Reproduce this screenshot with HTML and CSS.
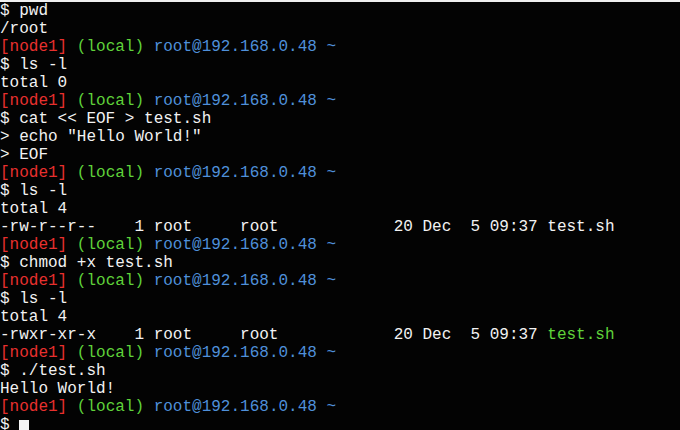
FILE: index.html
```html
<!DOCTYPE html>
<html>
<head>
<meta charset="utf-8">
<link rel="stylesheet" href="styles.css">
</head>
<body>
<div class="term">
<div class="ln">$ pwd</div>
<div class="ln">/root</div>
<div class="ln"><span class="r">[node1]</span> <span class="g">(local)</span> <span class="b">root@192.168.0.48 ~</span></div>
<div class="ln">$ ls -l</div>
<div class="ln">total 0</div>
<div class="ln"><span class="r">[node1]</span> <span class="g">(local)</span> <span class="b">root@192.168.0.48 ~</span></div>
<div class="ln">$ cat &lt;&lt; EOF &gt; test.sh</div>
<div class="ln">&gt; echo "Hello World!"</div>
<div class="ln">&gt; EOF</div>
<div class="ln"><span class="r">[node1]</span> <span class="g">(local)</span> <span class="b">root@192.168.0.48 ~</span></div>
<div class="ln">$ ls -l</div>
<div class="ln">total 4</div>
<div class="ln">-rw-r--r--    1 root     root            20 Dec  5 09:37 test.sh</div>
<div class="ln"><span class="r">[node1]</span> <span class="g">(local)</span> <span class="b">root@192.168.0.48 ~</span></div>
<div class="ln">$ chmod +x test.sh</div>
<div class="ln"><span class="r">[node1]</span> <span class="g">(local)</span> <span class="b">root@192.168.0.48 ~</span></div>
<div class="ln">$ ls -l</div>
<div class="ln">total 4</div>
<div class="ln">-rwxr-xr-x    1 root     root            20 Dec  5 09:37 <span class="g">test.sh</span></div>
<div class="ln"><span class="r">[node1]</span> <span class="g">(local)</span> <span class="b">root@192.168.0.48 ~</span></div>
<div class="ln">$ ./test.sh</div>
<div class="ln">Hello World!</div>
<div class="ln"><span class="r">[node1]</span> <span class="g">(local)</span> <span class="b">root@192.168.0.48 ~</span></div>
<div class="ln">$ <span class="cursor"> </span></div>
</div>
</body>
</html>
```
FILE: styles.css
```css
html, body {
  margin: 0;
  padding: 0;
  background: #000;
}
body {
  width: 680px;
  height: 430px;
  overflow: hidden;
}
.term {
  border-top: 2px solid #f0f0f0;
  background: #030303;
  height: 428px;
  color: #f2f2f2;
  font-family: "Liberation Mono", "Courier New", monospace;
  font-size: 16px;
}
.ln {
  height: 18px;
  line-height: 18px;
  white-space: pre;
}
.r { color: #e8302e; }
.g { color: #5fd23a; }
.b { color: #4f90da; }
.cursor {
  display: inline-block;
  width: 10px;
  height: 16px;
  background: #f4f4f4;
  vertical-align: -4px;
}
```
